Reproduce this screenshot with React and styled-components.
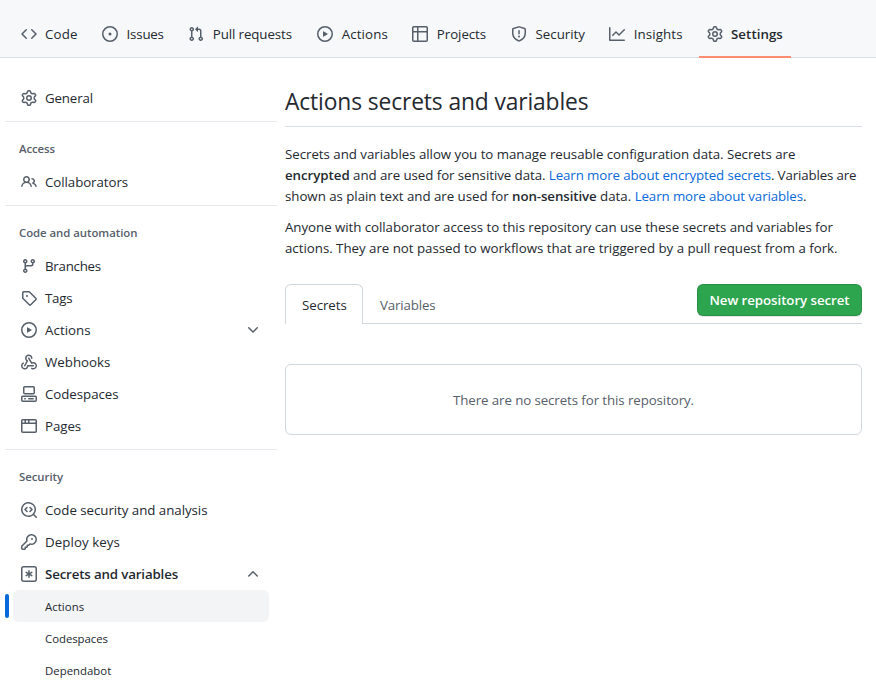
import React from 'react';
import styled, { createGlobalStyle, css } from 'styled-components';

const GlobalStyle = createGlobalStyle`
  *, *::before, *::after { box-sizing: border-box; }
  body {
    margin: 0;
    background: #ffffff;
    color: #24292f;
    font-family: "Open Sans", "Noto Sans", sans-serif;
    font-size: 13.3px;
    line-height: 21px;
    overflow: hidden;
  }
`;

const paths = {
  code: 'm11.28 3.22 4.25 4.25a.75.75 0 0 1 0 1.06l-4.25 4.25a.749.749 0 0 1-1.275-.326.749.749 0 0 1 .215-.734L13.94 8l-3.72-3.72a.749.749 0 0 1 .326-1.275.749.749 0 0 1 .734.215Zm-6.56 0a.751.751 0 0 1 1.042.018.751.751 0 0 1 .018 1.042L2.06 8l3.72 3.72a.749.749 0 0 1-.326 1.275.749.749 0 0 1-.734-.215L.47 8.53a.75.75 0 0 1 0-1.06Z',
  issue: 'M8 9.5a1.5 1.5 0 1 0 0-3 1.5 1.5 0 0 0 0 3ZM8 0a8 8 0 1 1 0 16A8 8 0 0 1 8 0ZM1.5 8a6.5 6.5 0 1 0 13 0 6.5 6.5 0 0 0-13 0Z',
  pull: 'M1.5 3.25a2.25 2.25 0 1 1 3 2.122v5.256a2.251 2.251 0 1 1-1.5 0V5.372A2.25 2.25 0 0 1 1.5 3.25Zm5.677-.177L9.573.677A.25.25 0 0 1 10 .854V2.5h1A2.5 2.5 0 0 1 13.5 5v5.628a2.251 2.251 0 1 1-1.5 0V5a1 1 0 0 0-1-1h-1v1.646a.25.25 0 0 1-.427.177L7.177 3.427a.25.25 0 0 1 0-.354ZM3.75 2.5a.75.75 0 1 0 0 1.5.75.75 0 0 0 0-1.5Zm0 9.5a.75.75 0 1 0 0 1.5.75.75 0 0 0 0-1.5Zm8.25.75a.75.75 0 1 0 1.5 0 .75.75 0 0 0-1.5 0Z',
  play: 'M8 0a8 8 0 1 1 0 16A8 8 0 0 1 8 0ZM1.5 8a6.5 6.5 0 1 0 13 0 6.5 6.5 0 0 0-13 0Zm4.879-2.773 4.264 2.559a.25.25 0 0 1 0 .428l-4.264 2.559A.25.25 0 0 1 6 10.559V5.442a.25.25 0 0 1 .379-.215Z',
  table: 'M0 1.75C0 .784.784 0 1.75 0h12.5C15.216 0 16 .784 16 1.75v12.5A1.75 1.75 0 0 1 14.25 16H1.75A1.75 1.75 0 0 1 0 14.25ZM6.5 6.5v8h7.75a.25.25 0 0 0 .25-.25V6.5Zm8-1.5V1.75a.25.25 0 0 0-.25-.25H6.5V5Zm-13 1.5v7.75c0 .138.112.25.25.25H5v-8ZM5 5V1.5H1.75a.25.25 0 0 0-.25.25V5Z',
  shield: 'M7.467.133a1.748 1.748 0 0 1 1.066 0l5.25 1.68A1.75 1.75 0 0 1 15 3.48V7c0 1.566-.32 3.182-1.303 4.682-.983 1.498-2.585 2.813-5.032 3.855a1.697 1.697 0 0 1-1.33 0c-2.447-1.042-4.049-2.357-5.032-3.855C1.32 10.182 1 8.566 1 7V3.48a1.75 1.75 0 0 1 1.217-1.667Zm.61 1.429a.25.25 0 0 0-.153 0l-5.25 1.68a.25.25 0 0 0-.174.238V7c0 1.358.275 2.666 1.057 3.86.784 1.194 2.121 2.34 4.366 3.297a.196.196 0 0 0 .154 0c2.245-.956 3.582-2.104 4.366-3.298C13.225 9.666 13.5 8.36 13.5 7V3.48a.251.251 0 0 0-.174-.237l-5.25-1.68ZM8.75 4.75v3a.75.75 0 0 1-1.5 0v-3a.75.75 0 0 1 1.5 0ZM9 10.5a1 1 0 1 1-2 0 1 1 0 0 1 2 0Z',
  graph: 'M1.5 1.75V13.5h13.75a.75.75 0 0 1 0 1.5H.75a.75.75 0 0 1-.75-.75V1.75a.75.75 0 0 1 1.5 0Zm14.28 2.53-5.25 5.25a.75.75 0 0 1-1.06 0L7 7.06 4.28 9.78a.751.751 0 0 1-1.042-.018.751.751 0 0 1-.018-1.042l3.25-3.25a.75.75 0 0 1 1.06 0L10 7.94l4.72-4.72a.751.751 0 0 1 1.042.018.751.751 0 0 1 .018 1.042Z',
  gear: 'M8 0a8.2 8.2 0 0 1 .701.031C9.444.095 9.99.645 10.16 1.29l.288 1.107c.018.066.079.158.212.224.231.114.454.243.668.386.123.082.233.09.299.071l1.103-.303c.644-.176 1.392.021 1.82.63.27.385.506.792.704 1.218.315.675.111 1.422-.364 1.891l-.814.806c-.049.048-.098.147-.088.294.016.257.016.515 0 .772-.01.147.038.246.088.294l.814.806c.475.469.679 1.216.364 1.891a7.977 7.977 0 0 1-.704 1.217c-.428.61-1.176.807-1.82.63l-1.102-.302c-.067-.019-.177-.011-.3.071a5.909 5.909 0 0 1-.668.386c-.133.066-.194.158-.211.224l-.29 1.106c-.168.646-.715 1.196-1.458 1.26a8.006 8.006 0 0 1-1.402 0c-.743-.064-1.289-.614-1.458-1.26l-.289-1.106c-.018-.066-.079-.158-.212-.224a5.738 5.738 0 0 1-.668-.386c-.123-.082-.233-.09-.299-.071l-1.103.303c-.644.176-1.392-.021-1.82-.63a8.12 8.12 0 0 1-.704-1.218c-.315-.675-.111-1.422.363-1.891l.815-.806c.05-.048.098-.147.088-.294a6.214 6.214 0 0 1 0-.772c.01-.147-.038-.246-.088-.294l-.815-.806C.635 6.045.431 5.298.746 4.623a7.92 7.92 0 0 1 .704-1.217c.428-.61 1.176-.807 1.82-.63l1.102.302c.067.019.177.011.3-.071.214-.143.437-.272.668-.386.133-.066.194-.158.211-.224l.29-1.106C6.009.645 6.556.095 7.299.03 7.53.01 7.764 0 8 0Zm-.571 1.525c-.036.003-.108.036-.137.146l-.289 1.105c-.147.561-.549.967-.998 1.189-.173.086-.34.183-.5.29-.417.278-.97.423-1.529.27l-1.103-.303c-.109-.03-.175.016-.195.045-.22.312-.412.644-.573.99-.014.031-.021.11.059.19l.815.806c.411.406.562.957.53 1.456a4.709 4.709 0 0 0 0 .582c.032.499-.119 1.05-.53 1.456l-.815.806c-.081.08-.073.159-.059.19.162.346.353.677.573.989.02.03.085.076.195.046l1.102-.303c.56-.153 1.113-.008 1.53.27.161.107.328.204.501.29.447.222.85.629.997 1.189l.289 1.105c.029.109.101.143.137.146a6.6 6.6 0 0 0 1.142 0c.036-.003.108-.036.137-.146l.289-1.105c.147-.561.549-.967.998-1.189.173-.086.34-.183.5-.29.417-.278.97-.423 1.529-.27l1.103.303c.109.029.175-.016.195-.045.22-.313.411-.644.573-.99.014-.031.021-.11-.059-.19l-.815-.806c-.411-.406-.562-.957-.53-1.456a4.709 4.709 0 0 0 0-.582c-.032-.499.119-1.05.53-1.456l.815-.806c.081-.08.073-.159.059-.19a6.464 6.464 0 0 0-.573-.989c-.02-.03-.085-.076-.195-.046l-1.102.303c-.56.153-1.113.008-1.53-.27a4.44 4.44 0 0 0-.501-.29c-.447-.222-.85-.629-.997-1.189l-.289-1.105c-.029-.11-.101-.143-.137-.146a6.6 6.6 0 0 0-1.142 0ZM11 8a3 3 0 1 1-6 0 3 3 0 0 1 6 0ZM9.5 8a1.5 1.5 0 1 0-3.001.001A1.5 1.5 0 0 0 9.5 8Z',
  people: 'M2 5.5a3.5 3.5 0 1 1 5.898 2.549 5.508 5.508 0 0 1 3.034 4.084.75.75 0 1 1-1.482.235 4 4 0 0 0-7.9 0 .75.75 0 0 1-1.482-.236A5.507 5.507 0 0 1 3.102 8.05 3.493 3.493 0 0 1 2 5.5ZM11 4a3.001 3.001 0 0 1 2.22 5.018 5.01 5.01 0 0 1 2.56 3.012.749.749 0 0 1-.885.954.752.752 0 0 1-.549-.514 3.507 3.507 0 0 0-2.522-2.372.75.75 0 0 1-.574-.73v-.352a.75.75 0 0 1 .416-.672A1.5 1.5 0 0 0 11 5.5.75.75 0 0 1 11 4Zm-5.5-.5a2 2 0 1 0-.001 3.999A2 2 0 0 0 5.5 3.5Z',
  branch: 'M9.5 3.25a2.25 2.25 0 1 1 3 2.122V6A2.5 2.5 0 0 1 10 8.5H6a1 1 0 0 0-1 1v1.128a2.251 2.251 0 1 1-1.5 0V5.372a2.25 2.25 0 1 1 1.5 0v1.836A2.493 2.493 0 0 1 6 7h4a1 1 0 0 0 1-1v-.628A2.25 2.25 0 0 1 9.5 3.25Zm-6 0a.75.75 0 1 0 1.5 0 .75.75 0 0 0-1.5 0Zm8.25-.75a.75.75 0 1 0 0 1.5.75.75 0 0 0 0-1.5ZM4.25 12a.75.75 0 1 0 0 1.5.75.75 0 0 0 0-1.5Z',
  tag: 'M1 7.775V2.75C1 1.784 1.784 1 2.75 1h5.025c.464 0 .91.184 1.238.513l6.25 6.25a1.75 1.75 0 0 1 0 2.474l-5.026 5.026a1.75 1.75 0 0 1-2.474 0l-6.25-6.25A1.752 1.752 0 0 1 1 7.775Zm1.5 0c0 .066.026.13.073.177l6.25 6.25a.25.25 0 0 0 .354 0l5.025-5.025a.25.25 0 0 0 0-.354l-6.25-6.25a.25.25 0 0 0-.177-.073H2.75a.25.25 0 0 0-.25.25ZM6 5a1 1 0 1 1 0 2 1 1 0 0 1 0-2Z',
  webhook: 'M5.5 4.25a2.25 2.25 0 0 1 4.5 0 .75.75 0 0 0 1.5 0 3.75 3.75 0 1 0-6.14 2.889l-2.272 4.258a.75.75 0 0 0 1.324.706L7 7.25a.75.75 0 0 0-.309-1.015A2.25 2.25 0 0 1 5.5 4.25ZM7.364 3.607a.75.75 0 0 1 1.03.257l2.608 4.349a3.75 3.75 0 1 1-.628 6.785.75.75 0 0 1 .752-1.299 2.25 2.25 0 1 0-.033-3.88.75.75 0 0 1-1.03-.256L7.107 4.636a.75.75 0 0 1 .257-1.03ZM2.9 8.776A.75.75 0 0 1 2.625 9.8 2.25 2.25 0 1 0 6 11.75a.75.75 0 0 1 .75-.751h5.5a.75.75 0 0 1 0 1.5H7.425a3.751 3.751 0 1 1-5.55-3.998.75.75 0 0 1 1.024.274Z',
  codespaces: 'M0 11.25c0-.966.784-1.75 1.75-1.75h12.5c.966 0 1.75.784 1.75 1.75v3A1.75 1.75 0 0 1 14.25 16H1.75A1.75 1.75 0 0 1 0 14.25Zm2-9.5C2 .784 2.784 0 3.75 0h8.5C13.216 0 14 .784 14 1.75v5a1.75 1.75 0 0 1-1.75 1.75h-8.5A1.75 1.75 0 0 1 2 6.75Zm1.75-.25a.25.25 0 0 0-.25.25v5c0 .138.112.25.25.25h8.5a.25.25 0 0 0 .25-.25v-5a.25.25 0 0 0-.25-.25Zm-2 9.5a.25.25 0 0 0-.25.25v3c0 .138.112.25.25.25h12.5a.25.25 0 0 0 .25-.25v-3a.25.25 0 0 0-.25-.25ZM7 12.75a.75.75 0 0 1 .75-.75h4.5a.75.75 0 0 1 0 1.5h-4.5a.75.75 0 0 1-.75-.75Zm-4 0a.75.75 0 0 1 .75-.75h.5a.75.75 0 0 1 0 1.5h-.5a.75.75 0 0 1-.75-.75Z',
  browser: 'M0 2.75C0 1.784.784 1 1.75 1h12.5c.966 0 1.75.784 1.75 1.75v10.5A1.75 1.75 0 0 1 14.25 15H1.75A1.75 1.75 0 0 1 0 13.25ZM14.5 6h-13v7.25c0 .138.112.25.25.25h12.5a.25.25 0 0 0 .25-.25Zm-6-3.5v2h6V2.75a.25.25 0 0 0-.25-.25ZM5 2.5v2h2v-2Zm-3.25 0a.25.25 0 0 0-.25.25V4.5h2v-2Z',
  codescan: 'M8.47 4.97a.75.75 0 0 0 0 1.06L9.94 7.5 8.47 8.97a.75.75 0 1 0 1.06 1.06l2-2a.75.75 0 0 0 0-1.06l-2-2a.75.75 0 0 0-1.06 0ZM6.53 6.03a.75.75 0 0 0-1.06-1.06l-2 2a.75.75 0 0 0 0 1.06l2 2a.75.75 0 1 0 1.06-1.06L5.06 7.5l1.47-1.47ZM12.246 13.307a7.501 7.501 0 1 1 1.06-1.06l2.474 2.473a.749.749 0 1 1-1.06 1.06l-2.474-2.473ZM1.5 7.5a6.002 6.002 0 0 0 3.608 5.504 6.002 6.002 0 0 0 6.486-1.117.748.748 0 0 1 .292-.293A6 6 0 1 0 1.5 7.5Z',
  key: 'M10.5 0a5.499 5.499 0 1 1-1.288 10.848l-.932.932a.749.749 0 0 1-.53.22H7v.75a.749.749 0 0 1-.22.53l-.5.5a.749.749 0 0 1-.53.22H5v.75a.749.749 0 0 1-.22.53l-.5.5a.749.749 0 0 1-.53.22h-2A1.75 1.75 0 0 1 0 14.25v-2c0-.199.079-.389.22-.53l4.932-4.932A5.5 5.5 0 0 1 10.5 0Zm-4 5.5c-.001.431.069.86.205 1.269a.75.75 0 0 1-.181.768L1.5 12.56v1.69c0 .138.112.25.25.25h1.69l.06-.06v-1.19a.75.75 0 0 1 .75-.75h1.19l.06-.06v-1.19a.75.75 0 0 1 .75-.75h1.19l1.023-1.025a.75.75 0 0 1 .768-.18A4 4 0 1 0 6.5 5.5ZM11 6a1 1 0 1 1 0-2 1 1 0 0 1 0 2Z',
  asterisk: 'M0 2.75A2.75 2.75 0 0 1 2.75 0h10.5A2.75 2.75 0 0 1 16 2.75v10.5A2.75 2.75 0 0 1 13.25 16H2.75A2.75 2.75 0 0 1 0 13.25ZM2.75 1.5c-.69 0-1.25.56-1.25 1.25v10.5c0 .69.56 1.25 1.25 1.25h10.5c.69 0 1.25-.56 1.25-1.25V2.75c0-.69-.56-1.25-1.25-1.25ZM8 4a.75.75 0 0 1 .75.75V6.7l1.69-.975a.75.75 0 0 1 .75 1.3L9.5 8l1.69.976a.75.75 0 0 1-.75 1.298L8.75 9.3v1.951a.75.75 0 0 1-1.5 0V9.299l-1.69.976a.75.75 0 0 1-.75-1.3L6.5 8l-1.69-.975a.75.75 0 0 1 .75-1.3l1.69.976V4.75A.75.75 0 0 1 8 4Z',
  chevronDown: 'M12.78 5.22a.749.749 0 0 1 0 1.06l-4.25 4.25a.749.749 0 0 1-1.06 0L3.22 6.28a.749.749 0 1 1 1.06-1.06L8 8.939l3.72-3.719a.749.749 0 0 1 1.06 0Z',
  chevronUp: 'M3.22 10.53a.749.749 0 0 1 0-1.06l4.25-4.25a.749.749 0 0 1 1.06 0l4.25 4.25a.749.749 0 1 1-1.06 1.06L8 6.811 4.28 10.53a.749.749 0 0 1-1.06 0Z',
};

const IconSvg = styled.svg`
  display: block;
  flex: none;
  width: 16px;
  height: 16px;
  fill: #57606a;
`;

const Icon = ({ name }) => (
  <IconSvg viewBox="0 0 16 16" aria-hidden="true">
    <path d={paths[name]} />
  </IconSvg>
);

const Tracked = styled.span`
  letter-spacing: ${(p) => p.$track || 0}px;
`;

const RepoNav = styled.nav`
  display: flex;
  align-items: flex-end;
  gap: 8px;
  height: 58px;
  padding-left: 13px;
  background: #f6f8fa;
  box-shadow: inset 0 -1px 0 #d8dee4;
`;

const RepoTab = styled.a`
  display: flex;
  align-items: center;
  gap: 8px;
  height: 48px;
  padding: 2px 8px 0;
  white-space: nowrap;
  border-bottom: 2px solid transparent;
  ${(p) =>
    p.$active &&
    css`
      font-weight: 600;
      border-bottom-color: #fd8c73;
    `}
`;

const RepoTabLabel = styled(Tracked)`
  width: ${(p) => p.$width}px;
  padding-left: ${(p) => p.$indent || 0}px;
`;

const Layout = styled.div`
  display: grid;
  grid-template-columns: 272px 577px;
  column-gap: 8px;
  padding: 24px 14px 0 5px;
`;

const Sidebar = styled.aside`
  display: flex;
  flex-direction: column;
`;

const NavGroup = styled.section`
  & + & {
    margin-top: 7px;
    border-top: 1px solid #e6eaee;
  }
`;

const GroupTitle = styled.h3`
  margin: 0;
  height: 44px;
  padding: 18px 14px 8px;
  color: #57606a;
  font-size: 11.4px;
  font-weight: 600;
  line-height: 18px;
`;

const NavRow = styled.a`
  display: flex;
  align-items: center;
  gap: 8px;
  height: 32px;
  margin: 0 8px;
  padding: 0 8px;
  border-radius: 6px;
  font-weight: ${(p) => (p.$bold ? 600 : 400)};
`;

const RowLabel = styled(Tracked)`
  flex: 1;
`;

const SubRow = styled.a`
  position: relative;
  display: flex;
  align-items: center;
  height: 32px;
  margin: 0 8px;
  padding-left: 32px;
  border-radius: 6px;
  font-size: 11.4px;
  ${(p) =>
    p.$active &&
    css`
      background: #f3f4f6;
      &::before {
        content: '';
        position: absolute;
        left: -8px;
        top: 4px;
        width: 4px;
        height: 24px;
        border-radius: 6px;
        background: #0969da;
      }
    `}
`;

const Main = styled.main`
  min-width: 0;
`;

const Title = styled.h1`
  margin: 0 0 17px;
  padding: 2px 0 6px;
  border-bottom: 1px solid #d8dee4;
  font-size: 22.8px;
  font-weight: 400;
  line-height: 36px;
`;

const Paragraph = styled.p`
  margin: 0 0 10px;
  white-space: nowrap;
`;

const Strong = styled.strong`
  font-weight: 600;
  letter-spacing: ${(p) => p.$track || 0}px;
`;

const Link = styled.a`
  color: #0969da;
  letter-spacing: ${(p) => p.$track || 0}px;
`;

const TabBar = styled.div`
  display: flex;
  align-items: flex-start;
  height: 40px;
  margin-top: 25px;
  box-shadow: inset 0 -1px 0 #d0d7de;
`;

const PageTab = styled.button`
  height: 40px;
  padding: 2px 16px 0;
  border: 1px solid transparent;
  border-bottom: 0;
  background: transparent;
  color: #57606a;
  font: inherit;
  ${(p) =>
    p.$active &&
    css`
      border-color: #d0d7de;
      border-radius: 6px 6px 0 0;
      background: #ffffff;
      color: #24292f;
      width: 78px;
    `}
`;

const PrimaryButton = styled.button`
  width: 165px;
  height: 32px;
  margin-left: auto;
  padding: 0;
  border: 1px solid rgba(27, 31, 36, 0.15);
  border-radius: 6px;
  background: #2da44e;
  box-shadow: 0 1px 0 rgba(27, 31, 36, 0.1);
  color: #ffffff;
  font: inherit;
  font-weight: 600;
  white-space: nowrap;
`;

const EmptyBox = styled.div`
  display: flex;
  align-items: center;
  justify-content: center;
  height: 71px;
  margin-top: 40px;
  padding-top: 2px;
  border: 1px solid #d0d7de;
  border-radius: 6px;
  color: #57606a;
`;

const repoTabs = [
  { icon: 'code', label: 'Code', width: 33, track: 0.2 },
  { icon: 'issue', label: 'Issues', width: 38, track: -0.2, indent: 0.6 },
  { icon: 'pull', label: 'Pull requests', width: 81, track: -0.1, indent: 0.8 },
  { icon: 'play', label: 'Actions', width: 47, track: 0.1, indent: 0.8 },
  { icon: 'table', label: 'Projects', width: 51, track: -0.05, indent: 0.8 },
  { icon: 'shield', label: 'Security', width: 50, track: 0, indent: 0.5 },
  { icon: 'graph', label: 'Insights', width: 50, track: 0.1, indent: 0.8 },
  { icon: 'gear', label: 'Settings', width: 52, track: 0.05, active: true },
];

const groups = [
  { rows: [{ icon: 'gear', label: 'General', track: -0.15 }] },
  {
    title: 'Access',
    track: -0.1,
    rows: [{ icon: 'people', label: 'Collaborators', track: -0.07 }],
  },
  {
    title: 'Code and automation',
    track: -0.05,
    rows: [
      { icon: 'branch', label: 'Branches', track: -0.25 },
      { icon: 'tag', label: 'Tags', track: -0.2 },
      { icon: 'play', label: 'Actions', track: 0.05, chevron: 'chevronDown' },
      { icon: 'webhook', label: 'Webhooks' },
      { icon: 'codespaces', label: 'Codespaces', track: -0.05 },
      { icon: 'browser', label: 'Pages', track: -0.05 },
    ],
  },
  {
    title: 'Security',
    track: -0.05,
    rows: [
      { icon: 'codescan', label: 'Code security and analysis', track: -0.04 },
      { icon: 'key', label: 'Deploy keys', track: 0.07 },
      { icon: 'asterisk', label: 'Secrets and variables', track: -0.15, bold: true, chevron: 'chevronUp' },
    ],
    children: [
      { label: 'Actions', track: 0.05, active: true },
      { label: 'Codespaces', track: -0.04 },
      { label: 'Dependabot' },
    ],
  },
];

export default function App() {
  return (
    <>
      <GlobalStyle />
      <RepoNav>
        {repoTabs.map((t) => (
          <RepoTab key={t.label} $active={t.active}>
            <Icon name={t.icon} />
            <RepoTabLabel $width={t.width} $track={t.track} $indent={t.indent}>{t.label}</RepoTabLabel>
          </RepoTab>
        ))}
      </RepoNav>
      <Layout>
        <Sidebar>
          {groups.map((g, i) => (
            <NavGroup key={i}>
              {g.title && <GroupTitle><Tracked $track={g.track}>{g.title}</Tracked></GroupTitle>}
              {g.rows.map((r) => (
                <NavRow key={r.label} $bold={r.bold}>
                  <Icon name={r.icon} />
                  <RowLabel $track={r.track}>{r.label}</RowLabel>
                  {r.chevron && <Icon name={r.chevron} />}
                </NavRow>
              ))}
              {g.children?.map((c) => (
                <SubRow key={c.label} $active={c.active}>
                  <Tracked $track={c.track}>{c.label}</Tracked>
                </SubRow>
              ))}
            </NavGroup>
          ))}
        </Sidebar>
        <Main>
          <Title><Tracked $track={-0.12}>Actions secrets and variables</Tracked></Title>
          <Paragraph>
            <Tracked $track={-0.035}>Secrets and variables allow you to manage reusable configuration data. Secrets are</Tracked>
            <br />
            <Strong $track={-0.04}>encrypted</Strong>
            <Tracked $track={-0.06}> and are used for sensitive data. </Tracked>
            <Link $track={-0.1}>Learn more about encrypted secrets</Link>
            <Tracked $track={-0.14}>. Variables are</Tracked>
            <br />
            <Tracked $track={-0.04}>shown as plain text and are used for </Tracked>
            <Strong $track={-0.1}>non-sensitive</Strong>
            <Tracked> data. </Tracked>
            <Link $track={-0.1}>Learn more about variables</Link>.
          </Paragraph>
          <Paragraph>
            <Tracked $track={-0.05}>Anyone with collaborator access to this repository can use these secrets and variables for</Tracked>
            <br />
            <Tracked $track={-0.02}>actions. They are not passed to workflows that are triggered by a pull request from a fork.</Tracked>
          </Paragraph>
          <TabBar>
            <PageTab $active><Tracked $track={-0.05}>Secrets</Tracked></PageTab>
            <PageTab><Tracked $track={-0.14}>Variables</Tracked></PageTab>
            <PrimaryButton><Tracked $track={-0.07}>New repository secret</Tracked></PrimaryButton>
          </TabBar>
          <EmptyBox><Tracked $track={-0.09}>There are no secrets for this repository.</Tracked></EmptyBox>
        </Main>
      </Layout>
    </>
  );
}
